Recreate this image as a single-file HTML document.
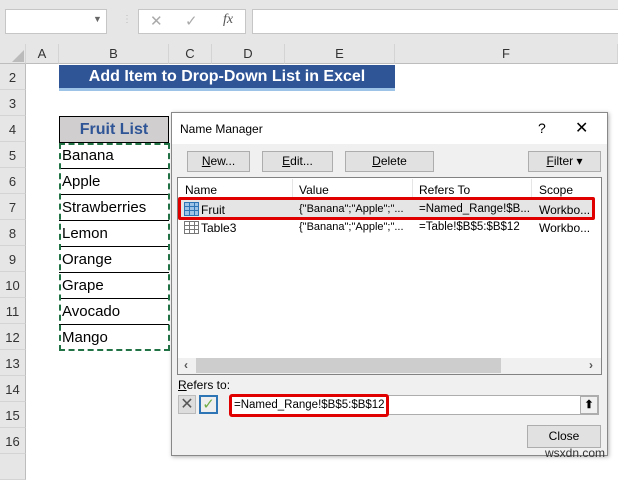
<!DOCTYPE html>
<html><head><meta charset="utf-8"><style>
*{margin:0;padding:0;box-sizing:border-box}
body{width:618px;height:464px;overflow:hidden;background:#fff;font-family:"Liberation Sans",sans-serif;position:relative}
.a{position:absolute}
.rh{position:absolute;left:0;width:26px;height:26px;border-bottom:1px solid #d4d4d4;background:#e6e6e6;font-size:13px;color:#333;text-align:center;line-height:28px;border-right:1px solid #bdbdbd}
.ch{position:absolute;top:44px;height:20px;border-right:1px solid #d4d4d4;font-size:13px;color:#333;text-align:center;line-height:20px;background:#e6e6e6;border-bottom:1px solid #bdbdbd}
.cell{position:absolute;left:59px;width:110px;height:26px;border-bottom:1px solid #000;font-size:15px;line-height:26px;padding-left:3px;color:#000}
.btn{position:absolute;height:21px;background:#e1e1e1;border:1px solid #adadad;font-size:12px;text-align:center;line-height:19px;color:#000}
.dlg{font-family:"Liberation Sans",sans-serif}
.hd{position:absolute;top:183px;font-size:12px;color:#000}
.rw{position:absolute;font-size:12px;color:#000}
</style></head><body>
<div class="a" style="left:0;top:0;width:618px;height:44px;background:#e6e6e6"></div>
<div class="a" style="left:5px;top:9px;width:102px;height:25px;background:#fff;border:1px solid #c6c6c6"></div>
<div class="a" style="left:93px;top:14px;font-size:9px;color:#666">▼</div>
<div class="a" style="left:122px;top:14px;font-size:10px;color:#bbb">⋮</div>
<div class="a" style="left:138px;top:9px;width:108px;height:25px;background:#fff;border:1px solid #c6c6c6"></div>
<div class="a" style="left:150px;top:12px;font-size:15px;color:#aaa">✕</div>
<div class="a" style="left:185px;top:12px;font-size:15px;color:#aaa">✓</div>
<div class="a" style="left:223px;top:12px;font-size:14px;color:#555;font-style:italic;font-family:'Liberation Serif',serif">fx</div>
<div class="a" style="left:252px;top:9px;width:370px;height:25px;background:#fff;border:1px solid #c6c6c6"></div>
<div class="ch" style="left:0;width:26px"></div>
<div class="a" style="left:12px;top:50px;width:0;height:0;border-left:12px solid transparent;border-bottom:12px solid #bbb"></div>
<div class="ch" style="left:26px;width:33px">A</div>
<div class="ch" style="left:59px;width:110px">B</div>
<div class="ch" style="left:169px;width:43px">C</div>
<div class="ch" style="left:212px;width:73px">D</div>
<div class="ch" style="left:285px;width:110px">E</div>
<div class="ch" style="left:395px;width:223px">F</div>
<div class="rh" style="top:64px">2</div><div class="rh" style="top:90px">3</div><div class="rh" style="top:116px">4</div><div class="rh" style="top:142px">5</div><div class="rh" style="top:168px">6</div><div class="rh" style="top:194px">7</div><div class="rh" style="top:220px">8</div><div class="rh" style="top:246px">9</div><div class="rh" style="top:272px">10</div><div class="rh" style="top:298px">11</div><div class="rh" style="top:324px">12</div><div class="rh" style="top:350px">13</div><div class="rh" style="top:376px">14</div><div class="rh" style="top:402px">15</div><div class="rh" style="top:428px">16</div><div class="rh" style="top:454px"></div>
<div class="a" style="left:59px;top:65px;width:336px;height:26px;background:#2f5597;border-bottom:3px solid #9dc3e6;color:#fff;font-weight:bold;font-size:16px;text-align:center;line-height:23px">Add Item to Drop-Down List in Excel</div>
<div class="a" style="left:59px;top:116px;width:110px;height:27px;background:#d0cece;border:1px solid #000;color:#2f5597;font-weight:bold;font-size:16px;text-align:center;line-height:25px">Fruit List</div>
<div class="cell" style="top:143px">Banana</div><div class="cell" style="top:169px">Apple</div><div class="cell" style="top:195px">Strawberries</div><div class="cell" style="top:221px">Lemon</div><div class="cell" style="top:247px">Orange</div><div class="cell" style="top:273px">Grape</div><div class="cell" style="top:299px">Avocado</div><div class="cell" style="top:325px;border-bottom:none">Mango</div>
<div class="a" style="left:59px;top:143px;width:111px;height:208px;border:2px dashed #217346"></div>
<div class="a dlg" style="left:171px;top:112px;width:437px;height:344px;background:#f0f0f0;border:1px solid #888;box-shadow:1px 1px 4px rgba(0,0,0,.3)">
<div class="a" style="left:0;top:0;width:435px;height:31px;background:#fff"></div>
<div class="a" style="left:8px;top:9px;font-size:12px">Name Manager</div>
<div class="a" style="left:366px;top:7px;font-size:14px">?</div>
<div class="a" style="left:403px;top:5px;font-size:16px">✕</div>
</div>
<div class="dlg">
<div class="btn" style="left:187px;top:151px;width:63px"><u>N</u>ew...</div>
<div class="btn" style="left:262px;top:151px;width:71px"><u>E</u>dit...</div>
<div class="btn" style="left:345px;top:151px;width:89px"><u>D</u>elete</div>
<div class="btn" style="left:528px;top:151px;width:73px"><u>F</u>ilter ▾</div>
<div class="a" style="left:177px;top:177px;width:425px;height:198px;background:#fff;border:1px solid #828282"></div>
<div class="a" style="left:292px;top:179px;width:1px;height:18px;background:#e5e5e5"></div>
<div class="a" style="left:412px;top:179px;width:1px;height:18px;background:#e5e5e5"></div>
<div class="a" style="left:531px;top:179px;width:1px;height:18px;background:#e5e5e5"></div>
<div class="hd" style="left:185px">Name</div><div class="hd" style="left:299px">Value</div><div class="hd" style="left:419px">Refers To</div><div class="hd" style="left:539px">Scope</div>
<div class="a" style="left:180px;top:200px;width:413px;height:18px;background:#e5e5e5"></div>
<div class="a" style="left:184px;top:202px;width:15px;height:14px;background:#9dc3e6;border:1px solid #2e75b6;background-image:linear-gradient(90deg,transparent 4px,#2e75b6 4px,#2e75b6 5px,transparent 5px,transparent 9px,#2e75b6 9px,#2e75b6 10px,transparent 10px),linear-gradient(transparent 3px,#2e75b6 3px,#2e75b6 4px,transparent 4px,transparent 7px,#2e75b6 7px,#2e75b6 8px,transparent 8px)"></div>
<div class="a" style="left:184px;top:221px;width:15px;height:13px;border:1px solid #777;background-image:linear-gradient(90deg,transparent 4px,#777 4px,#777 5px,transparent 5px,transparent 9px,#777 9px,#777 10px,transparent 10px),linear-gradient(transparent 3px,#777 3px,#777 4px,transparent 4px,transparent 7px,#777 7px,#777 8px,transparent 8px)"></div>
<div class="rw" style="left:201px;top:203px">Fruit</div><div class="rw" style="left:299px;top:203px;font-size:11px">{"Banana";"Apple";"...</div><div class="rw" style="left:419px;top:203px;font-size:11.5px">=Named_Range!$B...</div><div class="rw" style="left:539px;top:203px">Workbo...</div>
<div class="rw" style="left:201px;top:221px">Table3</div><div class="rw" style="left:299px;top:221px;font-size:11px">{"Banana";"Apple";"...</div><div class="rw" style="left:419px;top:221px;font-size:11.5px">=Table!$B$5:$B$12</div><div class="rw" style="left:539px;top:221px">Workbo...</div>
<div class="a" style="left:178px;top:197px;width:417px;height:23px;border:3px solid #e00000;border-radius:2px"></div>
<div class="a" style="left:178px;top:358px;width:423px;height:16px;background:#f0f0f0"></div>
<div class="a" style="left:196px;top:358px;width:305px;height:15px;background:#cdcdcd"></div>
<div class="a" style="left:184px;top:358px;font-size:12px;color:#555;font-weight:bold">‹</div>
<div class="a" style="left:589px;top:358px;font-size:12px;color:#555;font-weight:bold">›</div>
<div class="a" style="left:178px;top:378px;font-size:12px"><u>R</u>efers to:</div>
<div class="a" style="left:178px;top:395px;width:18px;height:19px;background:#ddd;border:1px solid #bbb;color:#555;font-size:16px;line-height:17px;text-align:center">✕</div>
<div class="a" style="left:199px;top:395px;width:19px;height:19px;background:#eee;border:2px solid #2e75b6;color:#70ad47;font-size:15px;line-height:15px;text-align:center">✓</div>
<div class="a" style="left:230px;top:395px;width:369px;height:20px;background:#fff;border:1px solid #adadad"></div>
<div class="a" style="left:580px;top:396px;width:18px;height:18px;background:#f0f0f0;border:1px solid #adadad;font-size:11px;text-align:center;line-height:16px;font-weight:bold">⬆</div>
<div class="a" style="left:229px;top:394px;width:160px;height:23px;border:3px solid #e00000;border-radius:3px"></div>
<div class="a" style="left:234px;top:399px;font-size:11.5px">=Named_Range!$B$5:$B$12</div>
<div class="btn" style="left:527px;top:425px;width:74px;height:23px;line-height:21px">Close</div>
</div>
<div class="a" style="left:545px;top:446px;font-size:12px;color:#333">wsxdn.com</div>
</body></html>
